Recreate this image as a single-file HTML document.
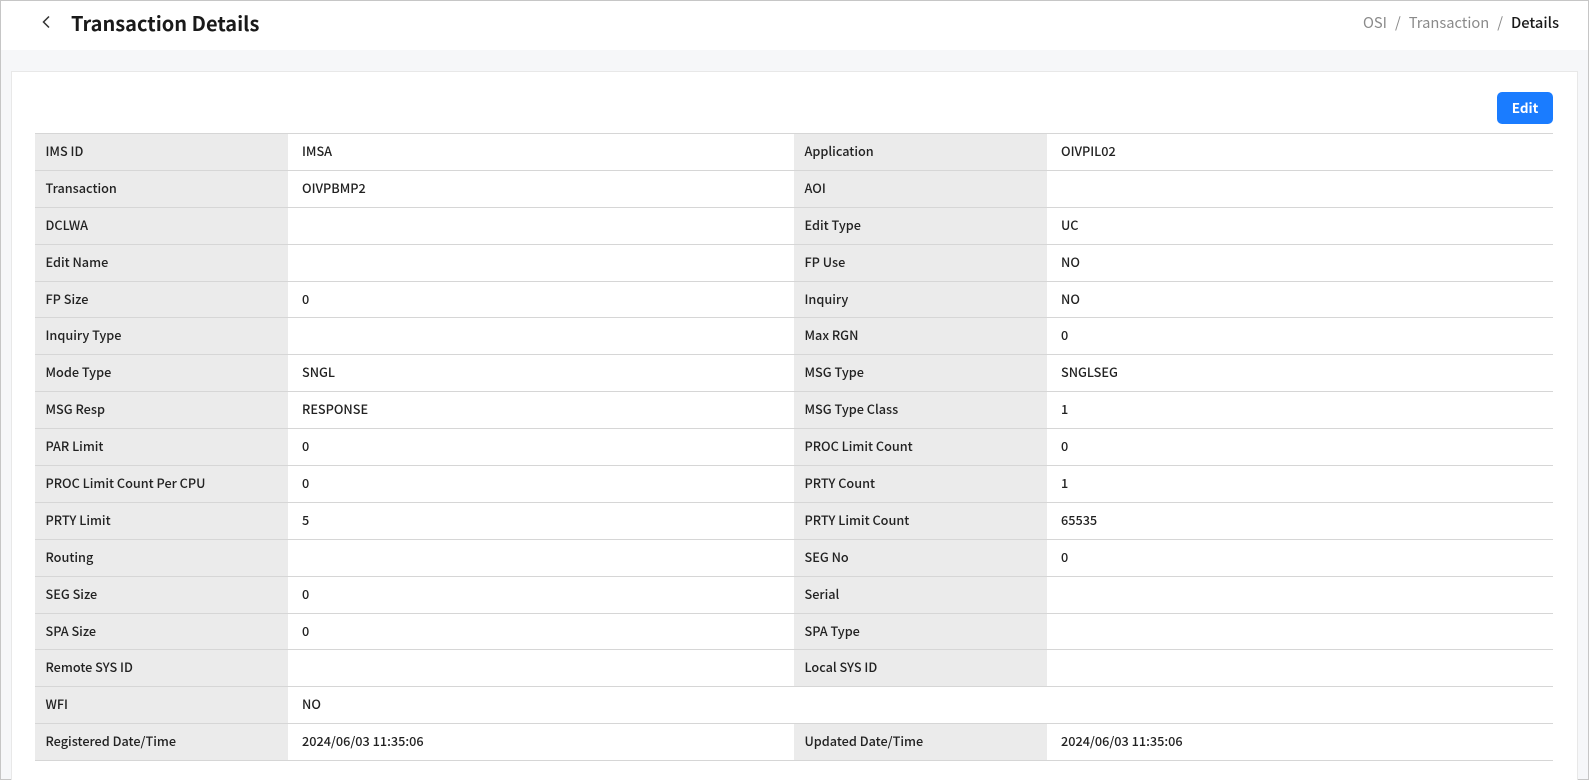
<!DOCTYPE html>
<html><head><meta charset="utf-8"><style>
*{box-sizing:border-box;margin:0;padding:0}
html,body{width:1589px;height:780px;overflow:hidden}
body{font-family:"Noto Sans CJK KR","Liberation Sans",sans-serif;background:#f6f7f9;border:1px solid #c6c6c6;position:relative;color:#222}
.hdr{position:absolute;left:0;top:0;width:1587px;height:49px;background:#fff}
.back{position:absolute;left:40px;top:14px}
.title{position:absolute;left:70px;top:7px;font-size:20px;font-weight:700;color:#1a1a1a}
.bc{position:absolute;right:29px;top:11px;font-size:14.7px;color:#8a8a8a}
.bc b{color:#1a1a1a;font-weight:500}
.bc span{margin:0 8px}
.card{position:absolute;left:10px;top:70px;width:1567px;height:730px;background:#fff;border:1px solid #e8e8e8}
.edit{position:absolute;left:1485px;top:20px;width:56px;height:32px;background:#1a7cff;color:#fff;border-radius:5px;font-size:13.5px;font-weight:700;text-align:center;line-height:31px}
table{position:absolute;left:22.5px;top:61px;width:1518px;border-collapse:collapse;table-layout:fixed;font-size:12.7px;font-weight:500}
td{height:36.9px;border-top:1px solid #d6d6d6;border-bottom:1px solid #d6d6d6;padding:0 11px 3px 14px;vertical-align:middle;white-space:nowrap}
td.l{background:#ebebeb;padding-left:11px}
</style></head><body>
<div class="hdr"><svg class="back" width="10" height="14" viewBox="0 0 10 14"><path d="M8 1.5 L2.5 7 L8 12.5" fill="none" stroke="#333" stroke-width="1.5"/></svg><div class="title">Transaction Details</div>
<div class="bc">OSI<span>/</span>Transaction<span>/</span><b>Details</b></div></div>
<div class="card"><div class="edit">Edit</div>
<table>
<colgroup><col style="width:253.5px"><col style="width:505.5px"><col style="width:253.5px"><col style="width:505.5px"></colgroup>
<tr><td class="l">IMS ID</td><td>IMSA</td><td class="l">Application</td><td>OIVPIL02</td></tr>
<tr><td class="l">Transaction</td><td>OIVPBMP2</td><td class="l">AOI</td><td></td></tr>
<tr><td class="l">DCLWA</td><td></td><td class="l">Edit Type</td><td>UC</td></tr>
<tr><td class="l">Edit Name</td><td></td><td class="l">FP Use</td><td>NO</td></tr>
<tr><td class="l">FP Size</td><td>0</td><td class="l">Inquiry</td><td>NO</td></tr>
<tr><td class="l">Inquiry Type</td><td></td><td class="l">Max RGN</td><td>0</td></tr>
<tr><td class="l">Mode Type</td><td>SNGL</td><td class="l">MSG Type</td><td>SNGLSEG</td></tr>
<tr><td class="l">MSG Resp</td><td>RESPONSE</td><td class="l">MSG Type Class</td><td>1</td></tr>
<tr><td class="l">PAR Limit</td><td>0</td><td class="l">PROC Limit Count</td><td>0</td></tr>
<tr><td class="l">PROC Limit Count Per CPU</td><td>0</td><td class="l">PRTY Count</td><td>1</td></tr>
<tr><td class="l">PRTY Limit</td><td>5</td><td class="l">PRTY Limit Count</td><td>65535</td></tr>
<tr><td class="l">Routing</td><td></td><td class="l">SEG No</td><td>0</td></tr>
<tr><td class="l">SEG Size</td><td>0</td><td class="l">Serial</td><td></td></tr>
<tr><td class="l">SPA Size</td><td>0</td><td class="l">SPA Type</td><td></td></tr>
<tr><td class="l">Remote SYS ID</td><td></td><td class="l">Local SYS ID</td><td></td></tr>
<tr><td class="l">WFI</td><td colspan="3">NO</td></tr>
<tr><td class="l">Registered Date/Time</td><td>2024/06/03 11:35:06</td><td class="l">Updated Date/Time</td><td>2024/06/03 11:35:06</td></tr>
</table></div>
</body></html>
